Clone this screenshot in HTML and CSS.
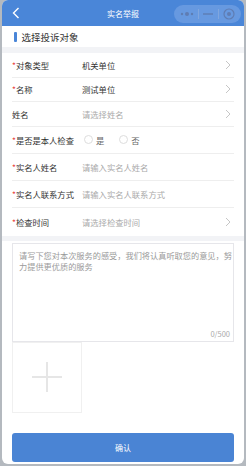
FILE: index.html
```html
<!DOCTYPE html>
<html lang="zh-CN">

<head>
    <meta charset="UTF-8">
    <meta name="viewport" content="width=device-width, initial-scale=1.0">
    <title>实名举报</title>
    <link rel="stylesheet" href="styles.css">
</head>

<body>
    <div class="phone">
        <div class="navbar">
            <svg class="back" width="8" height="12" viewBox="0 0 8 12">
                <path d="M6.5 1 L1.5 6 L6.5 11" fill="none" stroke="#fff" stroke-width="1.4" />
            </svg>
            <span class="nav-title">实名举报</span>
            <div class="capsule">
                <svg width="14" height="6" viewBox="0 0 14 6">
                    <circle cx="2" cy="3" r="1.2" fill="#5f7db3" />
                    <circle cx="7" cy="3" r="2" fill="#5f7db3" />
                    <circle cx="12" cy="3" r="1.2" fill="#5f7db3" />
                </svg>
                <span class="cap-line"></span>
                <svg width="10" height="4" viewBox="0 0 10 4">
                    <rect x="0" y="1.3" width="10" height="1.4" fill="#5f7db3" />
                </svg>
                <span class="cap-line"></span>
                <svg width="12" height="12" viewBox="0 0 12 12">
                    <circle cx="6" cy="6" r="5" fill="none" stroke="#5f7db3" stroke-width="1.2" />
                    <circle cx="6" cy="6" r="2" fill="#5f7db3" />
                </svg>
            </div>
        </div>

        <div class="section-title">
            <span class="bar"></span>
            <span>选择投诉对象</span>
        </div>

        <div class="form">
            <div class="row short">
                <span class="label"><i>*</i>对象类型</span>
                <span class="value">机关单位</span>
                <svg class="arrow" width="6" height="10" viewBox="0 0 6 10"><path d="M1 1 L5 5 L1 9" fill="none" stroke="#c6c6c6" stroke-width="1" /></svg>
            </div>
            <div class="row short">
                <span class="label"><i>*</i>名称</span>
                <span class="value">测试单位</span>
                <svg class="arrow" width="6" height="10" viewBox="0 0 6 10"><path d="M1 1 L5 5 L1 9" fill="none" stroke="#c6c6c6" stroke-width="1" /></svg>
            </div>
            <div class="row short">
                <span class="label">姓名</span>
                <span class="value placeholder">请选择姓名</span>
                <svg class="arrow" width="6" height="10" viewBox="0 0 6 10"><path d="M1 1 L5 5 L1 9" fill="none" stroke="#c6c6c6" stroke-width="1" /></svg>
            </div>
            <div class="row">
                <span class="label"><i>*</i>是否是本人检查</span>
                <span class="value radios">
                    <span class="radio"></span>是
                    <span class="radio second"></span>否
                </span>
            </div>
            <div class="row">
                <span class="label"><i>*</i>实名人姓名</span>
                <span class="value placeholder">请输入实名人姓名</span>
            </div>
            <div class="row">
                <span class="label"><i>*</i>实名人联系方式</span>
                <span class="value placeholder">请输入实名人联系方式</span>
            </div>
            <div class="row last">
                <span class="label"><i>*</i>检查时间</span>
                <span class="value placeholder">请选择检查时间</span>
                <svg class="arrow" width="6" height="10" viewBox="0 0 6 10"><path d="M1 1 L5 5 L1 9" fill="none" stroke="#c6c6c6" stroke-width="1" /></svg>
            </div>
        </div>

        <div class="feedback">
            <div class="textarea">
                <p class="hint">请写下您对本次服务的感受，我们将认真听取您的意见，努<br>力提供更优质的服务</p>
                <span class="count">0/500</span>
            </div>
            <div class="upload">
                <svg width="30" height="30" viewBox="0 0 30 30">
                    <rect x="14" y="0" width="2" height="30" fill="#e6e6e6" />
                    <rect x="0" y="14" width="30" height="2" fill="#e6e6e6" />
                </svg>
            </div>
            <button class="submit">确认</button>
        </div>
    </div>
</body>

</html>
```

FILE: styles.css
```css
* {
    box-sizing: border-box;
}

body {
    margin: 0;
    background-color: #b4b9bf;
    font-family: "Noto Sans CJK SC", "Noto Sans", sans-serif;
}

.phone {
    width: 242px;
    height: 464px;
    margin: 0 2px;
    background-color: #fff;
    border-radius: 6px;
    overflow: hidden;
}

.navbar {
    height: 26px;
    background-color: #4a86d8;
    display: flex;
    align-items: center;
    position: relative;
    padding-left: 10px;
}

.nav-title {
    position: absolute;
    left: 0;
    right: 0;
    text-align: center;
    color: #fff;
    font-size: 8px;
    pointer-events: none;
}

.capsule {
    position: absolute;
    right: 3px;
    top: 5px;
    width: 67px;
    height: 18px;
    border-radius: 9px;
    background-color: #6799e0;
    display: flex;
    align-items: center;
    justify-content: space-around;
    padding: 0 4px;
}

.cap-line {
    width: 1px;
    height: 10px;
    background-color: #80a6de;
}

.section-title {
    height: 21px;
    display: flex;
    align-items: center;
    gap: 5px;
    padding-left: 12px;
    font-size: 9.5px;
    color: #333;
    border-bottom: 6px solid #f2f3f6;
    box-sizing: content-box;
}

.bar {
    width: 2.5px;
    height: 10px;
    border-radius: 1px;
    background-color: #4a86d8;
}

.form {
    padding: 0 10px;
    border-bottom: 5px solid #f2f3f6;
}

.row {
    height: 27px;
    display: flex;
    align-items: center;
    border-bottom: 1px solid #eeeeee;
    font-size: 8.3px;
    color: #333;
}

.row.short {
    height: 24.5px;
}

.row.last {
    height: 28px;
    border-bottom: none;
}

.label {
    width: 70px;
}

.label i {
    font-style: normal;
    color: #e8433b;
}

.value {
    flex: 1;
}

.placeholder {
    color: #aaa;
}

.radios {
    display: flex;
    align-items: center;
    color: #666;
}

.radio {
    width: 9px;
    height: 9px;
    border: 1px solid #ddd;
    border-radius: 50%;
    margin: 0 3px 0 2px;
}

.radio.second {
    margin-left: 15px;
}

.arrow {
    margin-right: 3px;
}

.feedback {
    padding: 2px 10px 0;
}

.textarea {
    height: 99px;
    border: 1px solid #e6e6ea;
    position: relative;
    padding: 6px 4px 6px 6px;
}

.hint {
    margin: 0;
    font-size: 8.2px;
    line-height: 11px;
    color: #9a9a9a;
    white-space: nowrap;
}

.count {
    position: absolute;
    right: 3px;
    bottom: 2px;
    font-size: 7.5px;
    color: #aaa;
}

.upload {
    width: 70px;
    height: 71px;
    border: 1px solid #f0f0f0;
    display: flex;
    align-items: center;
    justify-content: center;
}

.submit {
    display: block;
    width: 100%;
    height: 29px;
    margin-top: 20px;
    border: none;
    border-radius: 3px;
    background-color: #4a84d4;
    color: #fff;
    font-family: inherit;
    font-size: 8px;
}
```
